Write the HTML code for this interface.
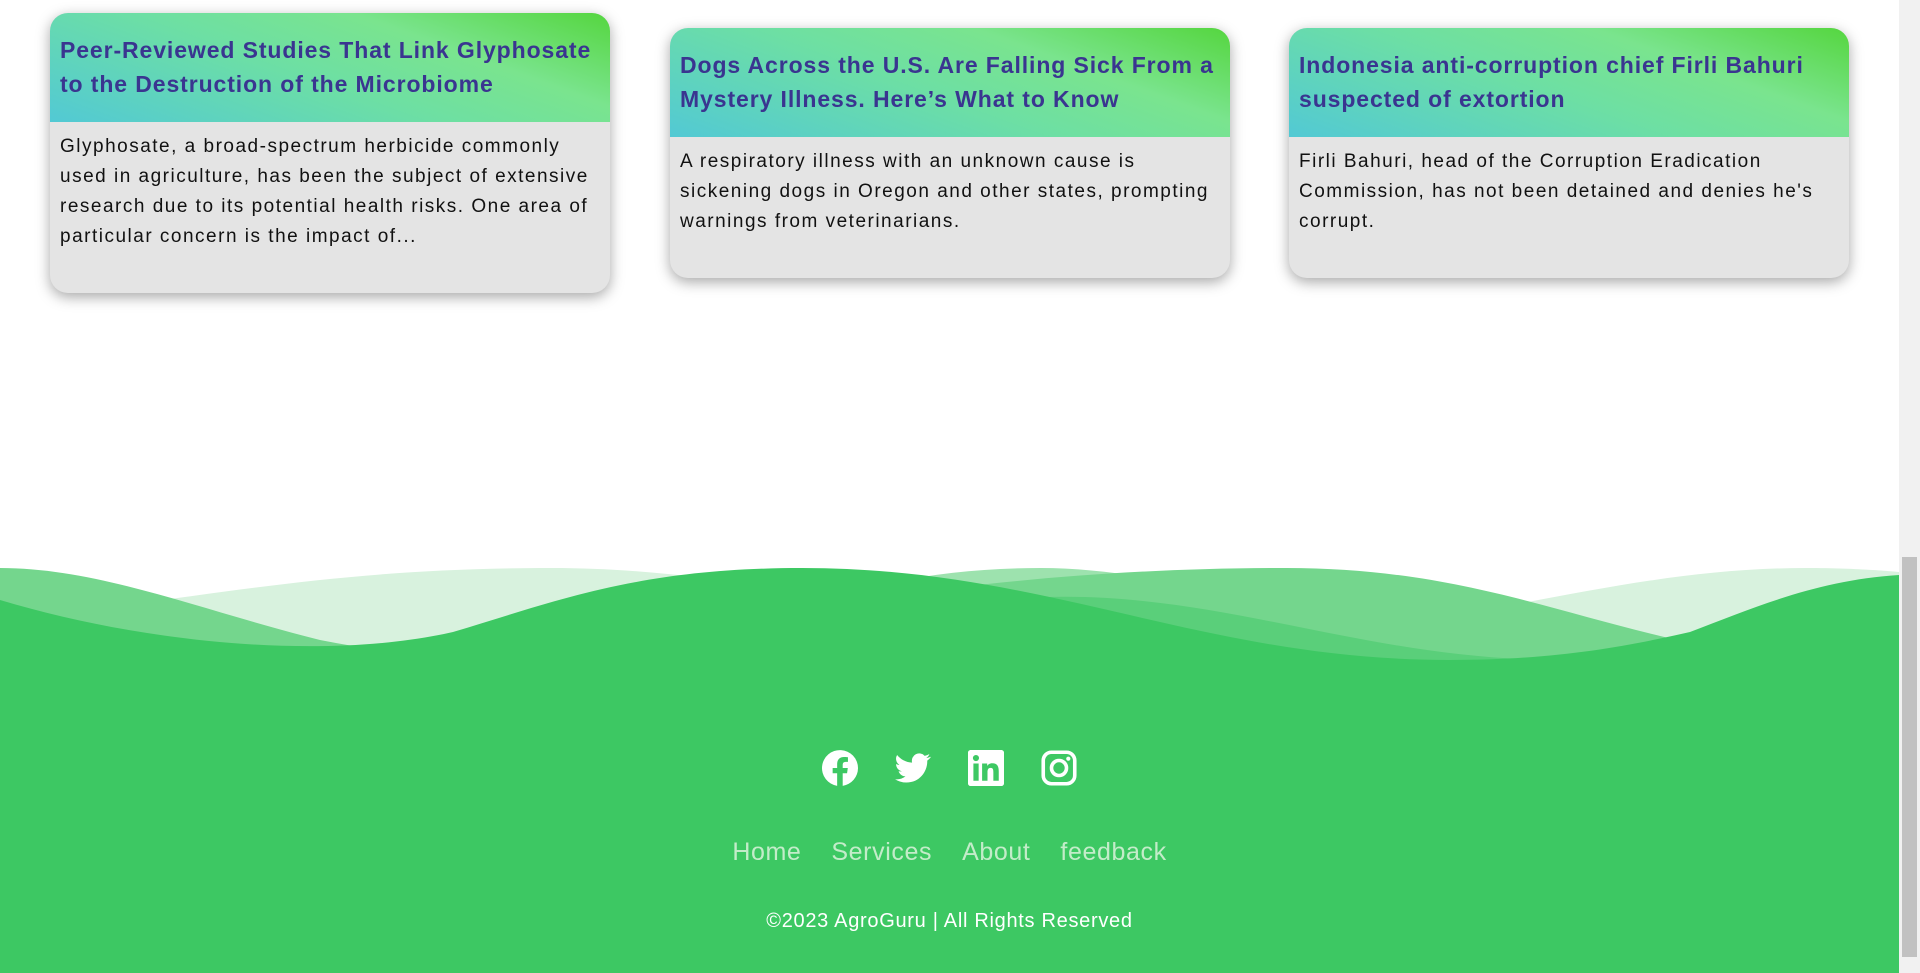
<!DOCTYPE html>
<html><head><meta charset="utf-8"><style>
*{margin:0;padding:0;box-sizing:border-box}
html,body{width:1920px;height:973px;overflow:hidden;background:#fff;font-family:"Liberation Sans",sans-serif}
.card{position:absolute;width:560px;border-radius:18px;overflow:hidden;background:#e4e4e4;box-shadow:0 4px 14px rgba(0,0,0,.35)}
.hd{height:109px;padding:20px 8px 0 10px;background:linear-gradient(20deg,#52c9d4 0%,#6ddfa4 45%,#7ae48e 70%,#55d63f 100%)}
.hd h2{font-size:23px;line-height:34px;font-weight:bold;color:#3a3590;letter-spacing:0.9px}
.bd{padding:10px 8px 0 10px;font-size:19px;line-height:30px;color:#111;letter-spacing:1.5px}
.sb{position:absolute;left:1899px;top:0;width:21px;height:973px;background:#f1f1f1}
.sb div{position:absolute;left:3px;top:557px;width:15px;height:400px;background:#c1c1c1}
.foot{position:absolute;left:0;top:670px;width:1899px;height:303px;background:#3dc863}
.icons{position:absolute;top:750px;left:0;width:1899px;display:flex;justify-content:center;gap:37px}
.links{position:absolute;top:838px;left:0;width:1899px;text-align:center;font-size:25px;color:#c3ecc9;letter-spacing:0.6px}
.links span{margin:0 15px}
.copy{position:absolute;top:910px;left:0;width:1899px;text-align:center;font-size:20px;color:#fff;letter-spacing:0.7px}
</style></head><body>
<div class="card" style="left:50px;top:13px;height:280px">
<div class="hd"><h2>Peer-Reviewed Studies That Link Glyphosate to the Destruction of the Microbiome</h2></div>
<div class="bd">Glyphosate, a broad-spectrum herbicide commonly used in agriculture, has been the subject of extensive research due to its potential health risks. One area of particular concern is the impact of...</div></div>
<div class="card" style="left:670px;top:28px;height:250px">
<div class="hd"><h2>Dogs Across the U.S. Are Falling Sick From a Mystery Illness. Here’s What to Know</h2></div>
<div class="bd">A respiratory illness with an unknown cause is sickening dogs in Oregon and other states, prompting warnings from veterinarians.</div></div>
<div class="card" style="left:1289px;top:28px;height:250px">
<div class="hd"><h2>Indonesia anti-corruption chief Firli Bahuri suspected of extortion</h2></div>
<div class="bd">Firli Bahuri, head of the Corruption Eradication Commission, has not been detained and denies he's corrupt.</div></div>

<div class="foot"></div>
<svg style="position:absolute;left:0;top:560px" width="1899" height="120" viewBox="0 560 1899 120">
<path fill="#d8f2de" d="M0,650 L0,620 C200,600 320,568 551,568 C780,568 950,640 1180,640 C1450,640 1600,568 1806,568 C1860,568 1899,572 1899,572 L1899,680 L0,680Z"/>
<path fill="#9de2ae" d="M600,680 C800,600 900,568 1041,568 C1200,568 1400,650 1600,680Z"/>
<path fill="#74d68d" d="M0,568 C100,568 200,610 320,640 C420,660 500,660 600,645 C800,610 1000,568 1286,568 C1500,568 1600,640 1800,660 L1800,680 L0,680Z"/>
<path fill="#5acf7a" d="M0,620 C60,640 140,660 220,660 C400,660 600,610 700,620 L700,680 L0,680Z M1000,600 C1200,580 1350,660 1560,660 L1560,680 L1000,680Z"/>
<path fill="#3dc863" d="M0,600 C150,645 330,660 453,632 C560,600 640,568 802,568 C1050,568 1200,660 1450,660 C1550,660 1620,648 1690,632 C1760,605 1820,580 1899,575 L1899,680 L0,680Z"/>
</svg>
<div class="icons">
<svg width="36" height="36" viewBox="0 0 24 24"><path fill="#fff" d="M24 12a12 12 0 1 0-13.9 11.9v-8.4H7.1V12h3V9.4c0-3 1.8-4.7 4.5-4.7 1.3 0 2.7.2 2.7.2v3h-1.5c-1.5 0-2 .9-2 1.9V12h3.4l-.5 3.5h-2.9v8.4A12 12 0 0 0 24 12z"/></svg>
<svg width="36" height="36" viewBox="0 0 24 24"><path fill="#fff" d="M23.6 4.6c-.9.4-1.8.6-2.8.8 1-.6 1.800-1.6 2.1-2.7-.9.6-2 1-3.1 1.2a4.9 4.9 0 0 0-8.4 4.5C7.4 8.2 3.8 6.3 1.4 3.3a4.9 4.9 0 0 0 1.5 6.6c-.8 0-1.6-.3-2.2-.6 0 2.4 1.7 4.4 3.9 4.8-.7.2-1.5.2-2.2.1.6 2 2.4 3.4 4.6 3.4A9.9 9.9 0 0 1 0 19.5 14 14 0 0 0 7.5 21.700c9.1 0 14-7.5 14-14v-.6c1-.7 1.8-1.6 2.5-2.5z"/></svg>
<svg width="36" height="36" viewBox="0 0 24 24"><path fill="#fff" d="M22.2 0H1.8C.8 0 0 .8 0 1.7v20.6c0 .9.8 1.7 1.8 1.7h20.4c1 0 1.8-.8 1.8-1.7V1.7C24 .8 23.200 0 22.200 0zM7.1 20.5H3.6V9h3.5v11.5zM5.3 7.4a2 2 0 1 1 0-4.1 2 2 0 0 1 0 4.1zm15.2 13.1h-3.6v-5.6c0-1.3 0-3-1.8-3s-2.1 1.4-2.1 2.9v5.7H9.4V9h3.4v1.6c.5-.9 1.6-1.8 3.4-1.8 3.6 0 4.3 2.4 4.3 5.5v6.2z"/></svg>
<svg width="36" height="36" viewBox="0 0 24 24"><rect x="1.5" y="1.5" width="21" height="21" rx="5.5" fill="none" stroke="#fff" stroke-width="2.4"/><circle cx="12" cy="12" r="5" fill="none" stroke="#fff" stroke-width="2.4"/><circle cx="18.2" cy="5.8" r="1.4" fill="#fff"/></svg>
</div>
<div class="links"><span>Home</span><span>Services</span><span>About</span><span>feedback</span></div>
<div class="copy">©2023 AgroGuru | All Rights Reserved</div>
<div class="sb"><div></div></div>
</body></html>
